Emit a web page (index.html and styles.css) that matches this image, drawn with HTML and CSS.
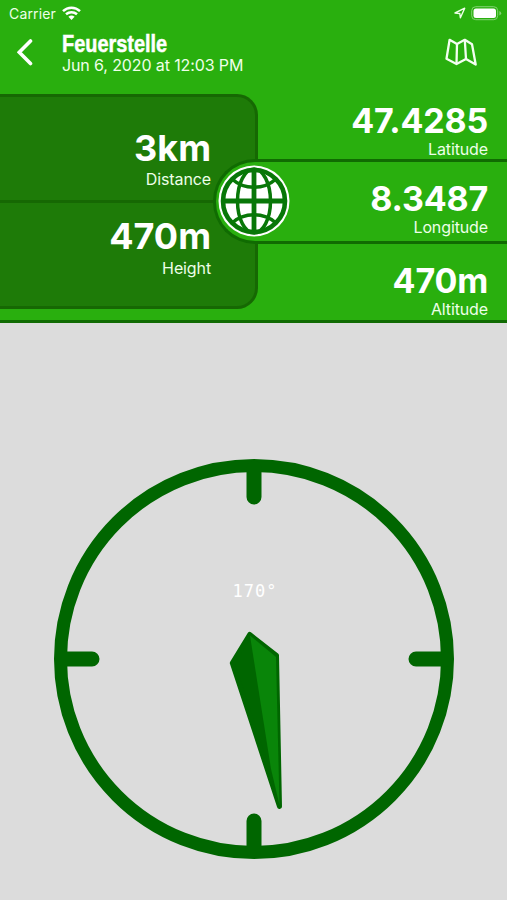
FILE: index.html
```html
<!DOCTYPE html>
<html lang="en">
<head>
<meta charset="utf-8">
<title>Feuerstelle</title>
<link rel="stylesheet" href="styles.css">
</head>
<body>
<header class="top">
  <div class="status">
    <span class="carrier">Carrier</span>
    <svg class="wifi" width="19" height="14" viewBox="0 0 19 14"><g fill="none" stroke="#fff" stroke-width="2.5"><path d="M1 5.1C5.8.5 13.2.5 18 5.1"/><path d="M4 8.3c3.2-2.9 7.800-2.900 11 0"/></g><path d="M6.400 10.700q3.100-2.300 6.200 0L9.500 13.900z" fill="#fff"/></svg>
    <svg class="location" width="12" height="12" viewBox="0 0 12 12"><path d="M1 6 10.700 1.200 6.400 10.800 5.800 6.500z" fill="none" stroke="#efffe9" stroke-width="1.400" stroke-linejoin="round"/></svg>
    <svg class="battery" width="31" height="15" viewBox="0 0 31 15"><rect x=".7" y=".7" width="26" height="13" rx="4" fill="none" stroke="#83d273" stroke-width="1"/><rect x="2.500" y="2.500" width="22.500" height="9.500" rx="2.500" fill="#fff"/><path d="M28.400 5v4.500q1.800-.7 1.800-2.250T28.400 5z" fill="#83d273"/></svg>
  </div>
  <nav class="bar">
    <svg class="back" width="18" height="28" viewBox="0 0 18 28"><path d="M13.500 3 2.300 14.300l11.200 11.200" fill="none" stroke="#fff" stroke-width="3.600" stroke-linecap="round"/></svg>
    <div class="heading">
      <h1>Feuerstelle</h1>
      <p>Jun 6, 2020 at 12:03 PM</p>
    </div>
    <svg class="map" width="34" height="30" viewBox="0 0 34 30"><g fill="none" stroke="#f3fff0" stroke-width="2.300" stroke-linejoin="round"><path d="M5.600 2.800 13 7 20.800 2.800 28 7.300 31.700 27.500 22 22 12.500 27 2.500 21.800z"/><path d="M13 7 12.500 27M20.800 2.800 22 22"/></g></svg>
  </nav>
  <section class="data">
    <div class="left">
      <div class="cell distance"><strong>3km</strong><span>Distance</span></div>
      <div class="cell height"><strong>470m</strong><span>Height</span></div>
    </div>
    <div class="right">
      <div class="cell latitude"><strong>47.4285</strong><span>Latitude</span></div>
      <div class="cell longitude"><strong>8.3487</strong><span>Longitude</span></div>
      <div class="cell altitude"><strong>470m</strong><span>Altitude</span></div>
    </div>
    <svg class="globe" width="74" height="74" viewBox="0 0 74 74">
      <circle cx="37" cy="37" r="35.500" fill="#fff"/>
      <circle cx="37" cy="37" r="31" fill="#fff" stroke="#087708" stroke-width="4.600"/>
      <g fill="none" stroke="#087708" stroke-width="3.500"><path d="M37 5v64M5 37h64" stroke-width="4.800"/><ellipse cx="37" cy="37" rx="16.500" ry="32"/><path d="M15 15c12 11 32 11 44 0M15 59c12-11 32-11 44 0"/></g>
    </svg>
  </section>
</header>
<main>
  <svg class="compass" width="402" height="402" viewBox="0 0 402 402">
    <circle cx="201" cy="201" r="193.500" fill="none" stroke="#006600" stroke-width="13"/>
    <path d="M201 10v29M201 392v-29M10 201h29M392 201h-29" stroke="#006600" stroke-width="15" stroke-linecap="round"/>
    <path d="M196.700 176.500 179.300 205 226.500 348.500 223.500 197.500z" fill="#006600" stroke="#006600" stroke-width="5" stroke-linejoin="round"/>
    <path d="M197 177.500 223 199 226.500 347 218 311z" fill="#098509"/>
    <text x="202" y="139" text-anchor="middle">170°</text>
  </svg>
</main>
</body>
</html>
```

FILE: styles.css
```css
* { box-sizing: border-box; }
body { margin: 0; height: 900px; overflow: hidden; background: #dcdcdc; font-family: Inter, "Noto Sans", sans-serif; color: #fff; }
svg { display: block; flex-shrink: 0; }
h1, p { margin: 0; }
.top { height: 323px; background: #29af0e; border-bottom: 3px solid #106b02; }
.status { height: 28px; display: flex; align-items: center; padding: 0 5px 2px 9px; }
.carrier { font-size: 14px; letter-spacing: .15px; width: 53px; white-space: nowrap; color: #edffe9; }
.location { margin-left: auto; margin-right: 5px; }
.bar { height: 66px; display: flex; padding: 0 29px 0 17px; }
.back { margin-top: 10px; }
.heading { margin-left: 27px; padding-top: 3px; }
h1 { font: bold 24px/25px "Liberation Sans", Arial, sans-serif; transform: scaleX(.83); transform-origin: left; white-space: nowrap; -webkit-text-stroke: .5px #fff; }
.heading p { font-size: 16px; line-height: 18px; letter-spacing: -.12px; white-space: nowrap; color: #efffea; }
.map { margin-left: auto; margin-top: 9px; }
.data { height: 226px; display: grid; grid-template-columns: 258px 249px; position: relative; }
.left { height: 215px; background: #1e7b08; border: 3px solid #166803; border-left: 0; border-radius: 0 21px 21px 0; }
.cell { display: flex; flex-direction: column; align-items: flex-end; }
.cell strong { font-size: 36px; line-height: 40px; font-weight: 650; }
.cell span { font-size: 16px; line-height: 20px; letter-spacing: -.12px; color: #edffe9; }
.left .cell { padding-right: 44px; }
.distance { height: 106px; padding-top: 31px; border-bottom: 3px solid #166803; }
.distance span { margin-top: 1px; }
.height { padding-top: 13px; }
.height span { margin-top: 2px; }
.right { min-width: 0; }
.right .cell { padding-right: 19px; }
.right strong { font-size: 34px; line-height: 34px; letter-spacing: -.2px; }
.right .cell span { line-height: 18px; margin-top: 2px; }
.latitude { height: 65px; padding-top: 10px; }
.longitude { height: 85px; margin-left: -45px; padding-top: 20px; border: 3px solid #106b02; border-right: 0; border-radius: 42px 0 0 42px; background: #29af0e; position: relative; }
.altitude { padding-top: 20px; }
.globe { position: absolute; left: 217px; top: 70px; }
main { display: flex; justify-content: center; padding-top: 135px; }
.compass text { font: 17px "DejaVu Sans Mono", monospace; letter-spacing: 1px; fill: #fff; }
```
